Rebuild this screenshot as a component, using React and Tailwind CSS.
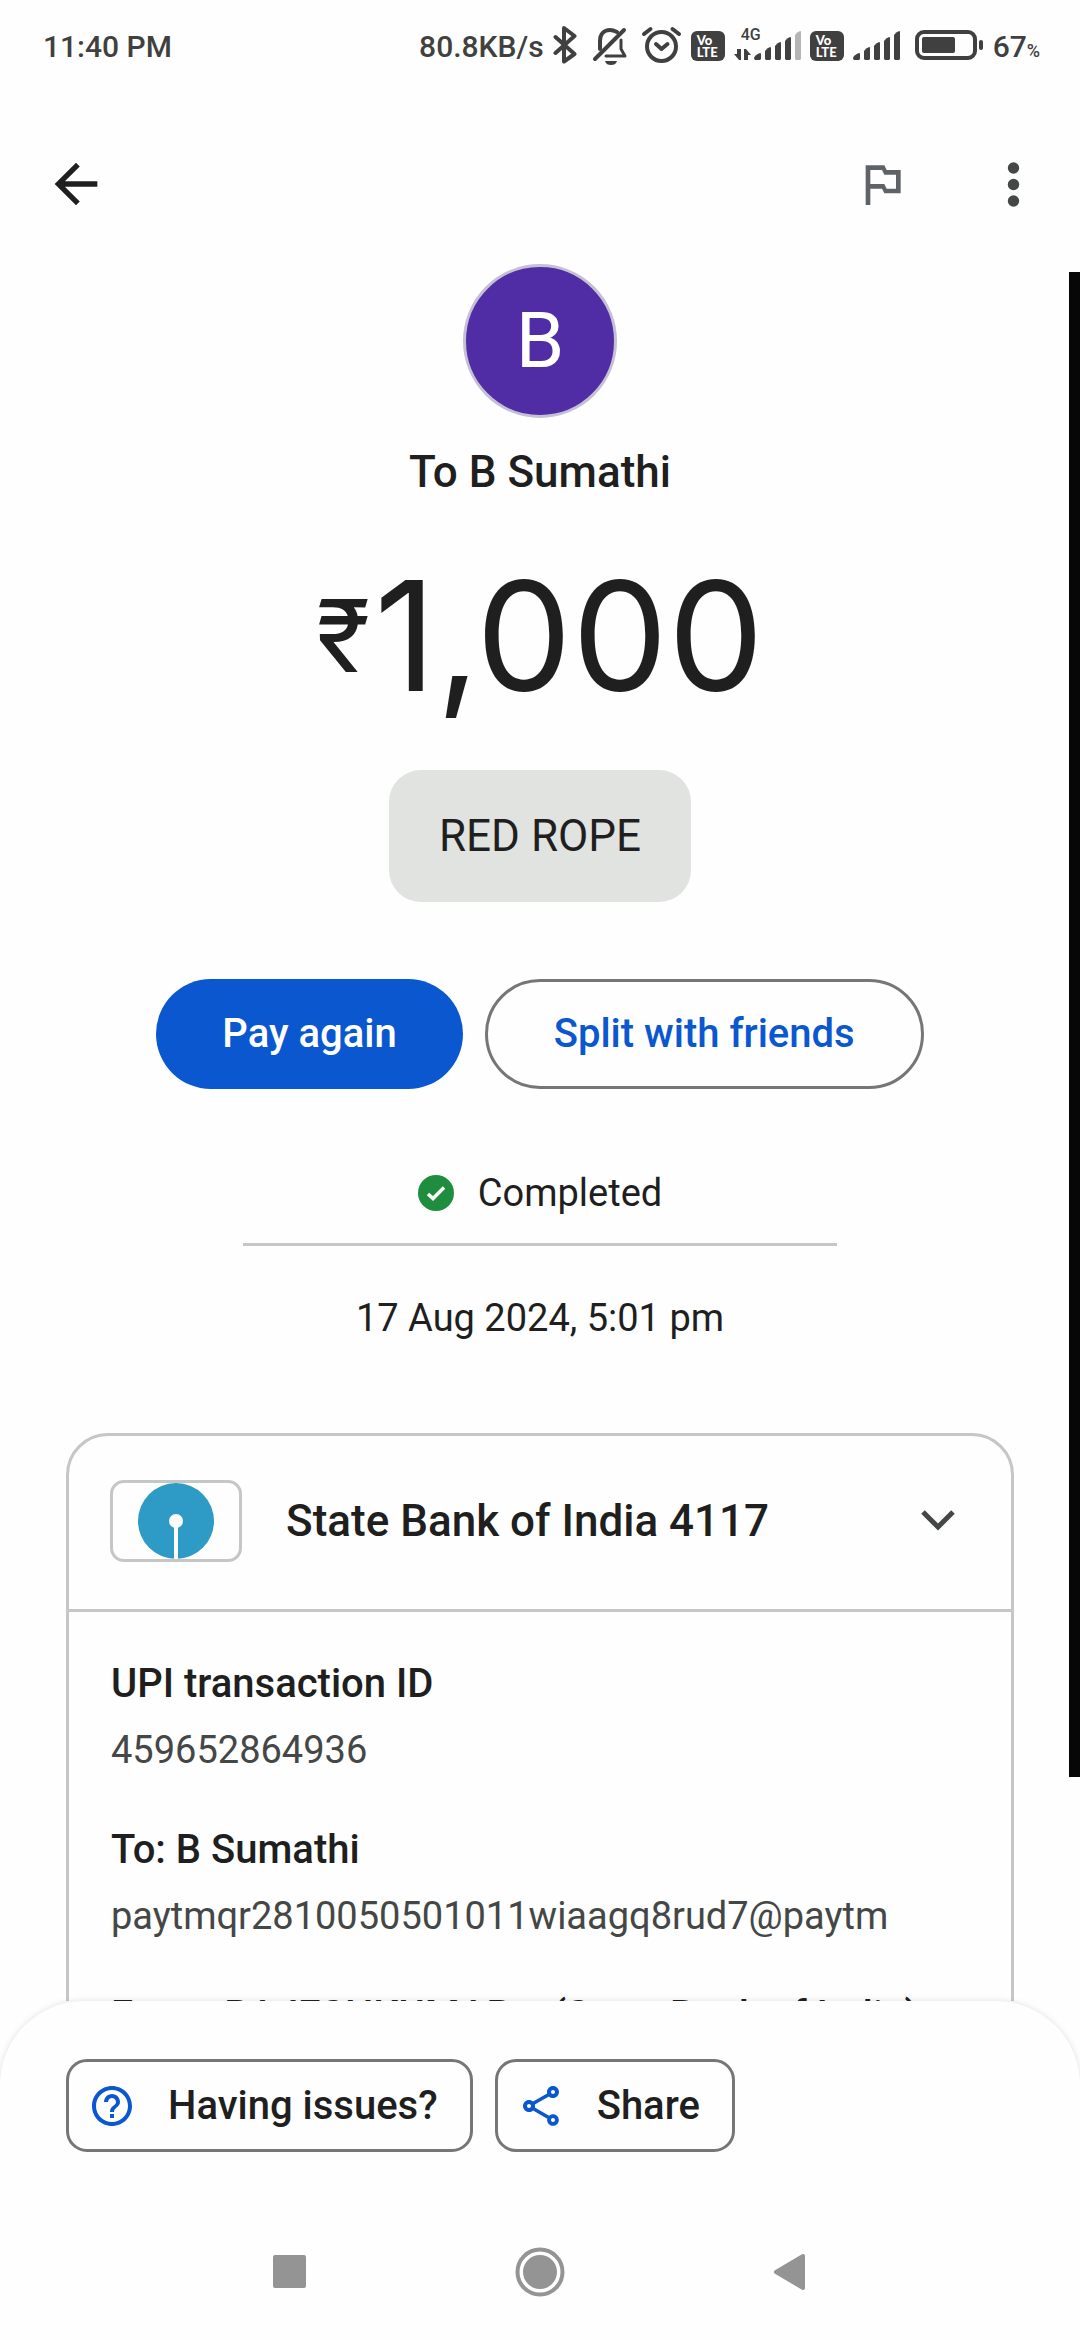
import { MdArrowBack, MdHelpOutline, MdOutlinedFlag, MdOutlineShare } from "react-icons/md";

const details = [
  { label: "UPI transaction ID", value: "459652864936" },
  { label: "To: B Sumathi", value: "paytmqr2810050501011wiaagq8rud7@paytm" },
  { label: "From: RAJESHKUMAR s (State Bank of India)", value: "" },
];

function BluetoothIcon() {
  return (
    <svg width="27" height="42" viewBox="0 0 27 42" fill="none" stroke="currentColor" strokeWidth="4" strokeLinecap="round" strokeLinejoin="round">
      <path d="M2.5 12 21.5 29 11 36.5V3L21.5 11 2.5 28" />
    </svg>
  );
}

function MutedBellIcon() {
  return (
    <svg width="42" height="42" viewBox="0 0 42 42" fill="none" stroke="currentColor" strokeWidth="4" strokeLinecap="round" strokeLinejoin="round">
      <path d="M35 5 6 34" />
      <path d="M11 24v-8c0-7 4-11 10-11 3 0 5 1 7 2" />
      <path d="M32 15v9l4 7H17" strokeWidth="3" />
      <path d="M16 36h12c-1 3-3 4-6 4s-5-1-6-4z" fill="currentColor" stroke="none" />
    </svg>
  );
}

function AlarmIcon() {
  return (
    <svg width="42" height="42" viewBox="0 0 42 42" fill="none" stroke="currentColor" strokeWidth="4" strokeLinecap="round" strokeLinejoin="round">
      <circle cx="21.5" cy="21.5" r="14.5" />
      <path d="m16 19 5.5 5 6-5M4 9l6.5-5M39 9l-6.5-5" />
    </svg>
  );
}

function VoLteBadge() {
  return (
    <span className="flex h-[30px] w-[34px] flex-col justify-center rounded-md bg-[#404040] pl-[6px] font-[Lato,sans-serif] text-[13px] leading-[12px] font-black text-white">
      <span>Vo</span>
      <span>LTE</span>
    </span>
  );
}

function SignalBars({ last = "currentColor" }) {
  return (
    <g fill="currentColor">
      <path d="M1 35q-1-1-1-2 1-3 6-5 1 0 1 1v5l-1 1z" />
      <path d="M11 26q2-3 5-4 1 0 1 1v11l-1 1h-4l-1-1z" />
      <path d="M21 21q2-3 5-4 1 0 1 1v16l-1 1h-4l-1-1z" />
      <path d="M31 16q2-3 5-4 1 0 1 1v21l-1 1h-4l-1-1z" />
      <path d="M41 10q2-3 5-4 1 0 1 1v27l-1 1h-4l-1-1z" fill={last} />
    </g>
  );
}

function StatusBar() {
  return (
    <div className="flex h-[92px] items-center justify-between pr-10 pl-[43px] text-[30px] font-medium text-[#404040]">
      <span>11:40 PM</span>
      <div className="flex items-center gap-[9px]">
        <span>80.8KB/s</span>
        <BluetoothIcon />
        <MutedBellIcon />
        <AlarmIcon />
        <VoLteBadge />
        <div className="relative">
          <svg width="67" height="42" viewBox="0 0 67 42">
            <path d="M7 24v11h-2l-5-6h3v-5zM10 35V24h2l5 6h-3v5z" fill="currentColor" />
            <g transform="translate(20 0)">
              <SignalBars last="#b5b5b5" />
            </g>
          </svg>
          <span className="absolute top-0 left-[7px] text-[16px] leading-5">4G</span>
        </div>
        <VoLteBadge />
        <svg width="48" height="42" viewBox="0 0 48 42">
          <SignalBars />
        </svg>
        <svg width="74" height="42" viewBox="0 0 74 42">
          <rect x="7" y="7" width="58" height="26" rx="7" fill="none" stroke="currentColor" strokeWidth="4" />
          <rect x="12" y="12" width="33" height="16" rx="2" fill="currentColor" />
          <rect x="69" y="15" width="4" height="10" rx="2" fill="currentColor" />
        </svg>
        <span className="flex items-baseline">
          67<span className="text-[18px]">%</span>
        </span>
      </div>
    </div>
  );
}

function TopBar() {
  return (
    <header className="flex h-[172px] items-center justify-between pt-3 pr-[33px] pl-[44px]">
      <button aria-label="Back" className="text-[#1f1f1f]">
        <MdArrowBack size={64} />
      </button>
      <div className="flex items-center gap-[70px]">
        <button aria-label="Report" className="text-[#5f6368]">
          <MdOutlinedFlag size={56} />
        </button>
        <button aria-label="More options" className="text-[#444746]">
          <svg width="67" height="67" viewBox="0 0 67 67" fill="currentColor">
            <circle cx="33.500" cy="17" r="5.700" />
            <circle cx="33.500" cy="33.500" r="5.700" />
            <circle cx="33.500" cy="50" r="5.700" />
          </svg>
        </button>
      </div>
    </header>
  );
}

function BankCard() {
  return (
    <section className="mx-[66px] mt-[87px] rounded-t-[42px] border-[3px] border-[#c4c7c5]">
      <button className="flex h-[176px] w-full items-center border-b-[3px] border-[#c4c7c5] pr-[49px] pb-1 pl-[41px] text-left">
        <span className="flex h-[82px] w-[132px] shrink-0 items-center justify-center rounded-[14px] border-[3px] border-[#c4c7c5]">
          <svg width="76" height="76" viewBox="0 0 76 76">
            <circle cx="38" cy="38" r="38" fill="#2d9bc5" />
            <circle cx="38" cy="38" r="7" fill="#fefefe" />
            <path d="M36 42h4v34h-4z" fill="#fefefe" />
          </svg>
        </span>
        <span className="ml-[44px] flex-1 text-[44px] leading-[56px] font-medium">State Bank of India 4117</span>
        <svg width="48" height="48" viewBox="0 0 48 48" fill="none" stroke="#444746" strokeWidth="5">
          <path d="m9 15 15 15 15-15" />
        </svg>
      </button>
      <dl className="flex flex-col gap-[44px] px-[42px] pt-[44px]">
        {details.map((row) => (
          <div key={row.label} className="flex flex-col gap-[10px] leading-[56px]">
            <dt className="text-[40px] font-medium whitespace-nowrap">{row.label}</dt>
            <dd className="text-[38px] text-[#444746]">{row.value}</dd>
          </div>
        ))}
      </dl>
    </section>
  );
}

function ActionChip({ icon, children }) {
  return (
    <button className="flex h-[93px] items-center gap-[32px] rounded-[21px] border-[3px] border-[#747775] pr-[32px] pl-[19px] text-[40px] font-medium">
      <span className="text-[#0b57d0]">{icon}</span>
      {children}
    </button>
  );
}

function NavBar() {
  return (
    <nav className="flex h-[136px] items-center justify-center gap-[154px] text-[#949494]">
      <button aria-label="Recent apps" className="flex w-24 justify-center">
        <svg width="34" height="34" viewBox="0 0 34 34" fill="currentColor">
          <rect width="33" height="33" rx="2" />
        </svg>
      </button>
      <button aria-label="Home" className="flex w-24 justify-center">
        <svg width="50" height="50" viewBox="0 0 50 50">
          <circle cx="25" cy="25" r="22.500" fill="none" stroke="currentColor" strokeWidth="4" />
          <circle cx="25" cy="25" r="17" fill="currentColor" />
        </svg>
      </button>
      <button aria-label="Back" className="flex w-24 justify-center">
        <svg width="34" height="38" viewBox="0 0 34 38" fill="currentColor" stroke="currentColor" strokeWidth="4" strokeLinejoin="round">
          <path d="M3 19 30 3v32z" />
        </svg>
      </button>
    </nav>
  );
}

export default function App() {
  return (
    <div className="relative flex h-screen flex-col overflow-hidden bg-[#fefefe] font-[Roboto,sans-serif] text-[#1f1f1f]">
      <StatusBar />
      <TopBar />

      <main className="min-h-0 flex-1 overflow-hidden">
        <div className="flex flex-col items-center">
          <div className="flex size-[154px] items-center justify-center rounded-full border-[3px] border-[#c5c0d6] bg-[#502da5] text-[78px] leading-none text-white">
            B
          </div>
          <h1 className="mt-[26px] text-[44px] leading-[56px] font-medium">To B Sumathi</h1>
          <p className="mt-[56px] flex items-center gap-1 font-[Inter,sans-serif] text-[152px] leading-[160px]">
            <span className="text-[100px]">₹</span>
            <span>1,000</span>
          </p>
          <p className="mt-[54px] flex h-[132px] items-center rounded-[32px] bg-[#e1e3e0] px-[50px] text-[44px]">RED ROPE</p>

          <div className="mt-[77px] flex gap-[22px] text-[40px] font-medium">
            <button className="h-[110px] rounded-full bg-[#0b57d0] px-[66px] text-white">Pay again</button>
            <button className="h-[110px] rounded-full border-[3px] border-[#747775] px-[66px] text-[#0b57d0]">
              Split with friends
            </button>
          </div>

          <div className="mt-[76px] flex w-[55%] items-center justify-center gap-6 border-b-[3px] border-[#c4c7c5] pb-[22px] text-[38px] leading-[56px]">
            <svg width="36" height="36" viewBox="0 0 36 36">
              <circle cx="18" cy="18" r="18" fill="#1e8e3e" />
              <path d="m10 19 5 4.500 11-11" fill="none" stroke="#fff" strokeWidth="3.500" />
            </svg>
            Completed
          </div>
          <p className="mt-[44px] text-[38px] leading-[56px]">17 Aug 2024, 5:01 pm</p>
        </div>

        <BankCard />
      </main>

      <footer className="relative rounded-t-[84px] bg-[#fefefe] pt-[58px] shadow-[0_0_6px_rgba(0,0,0,0.12)]">
        <div className="flex gap-[22px] px-[66px] pb-[52px]">
          <ActionChip icon={<MdHelpOutline size={48} />}>Having issues?</ActionChip>
          <ActionChip icon={<MdOutlineShare size={48} />}>Share</ActionChip>
        </div>
        <NavBar />
      </footer>

      {/* scroll thumb */}
      <div className="absolute top-[272px] right-0 h-[64.3%] w-[11px] bg-[#070707]" />
    </div>
  );
}
